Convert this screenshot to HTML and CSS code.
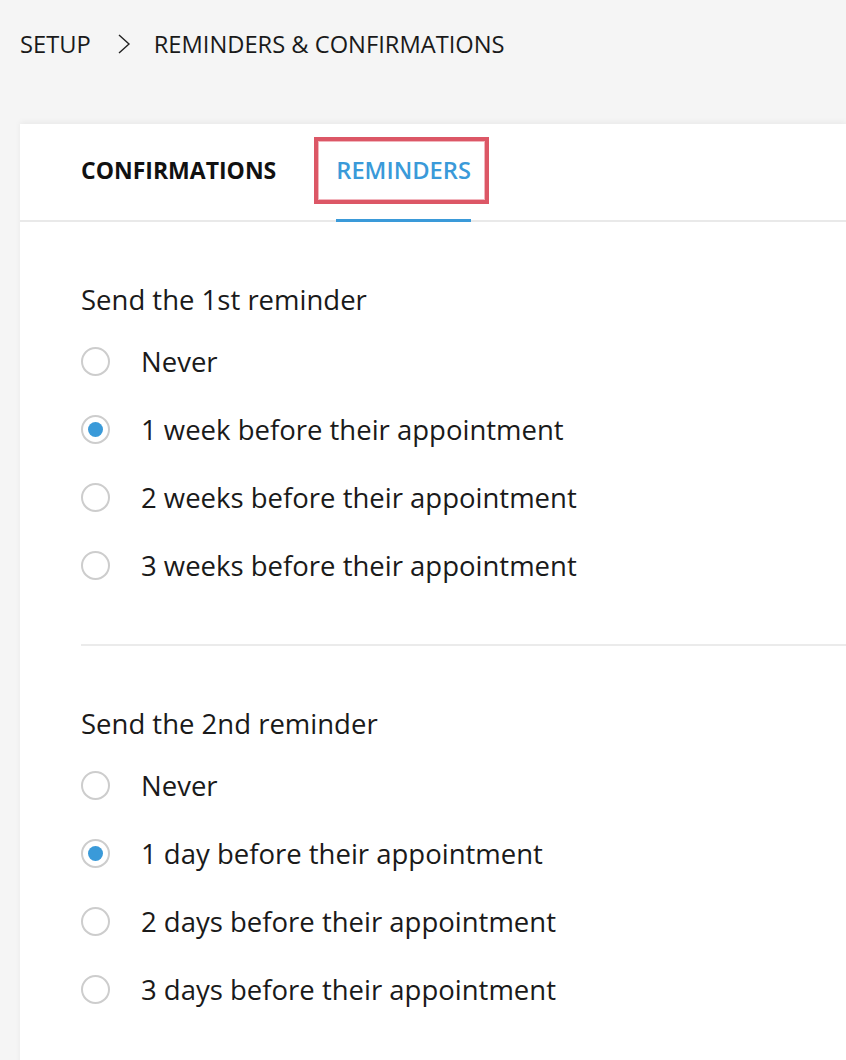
FILE: index.html
```html
<!DOCTYPE html>
<html>
<head>
<meta charset="utf-8">
<link rel="stylesheet" href="styles.css">
</head>
<body>
<nav class="breadcrumb">
  <span class="crumb">SETUP</span>
  <svg class="chev" width="14" height="22" viewBox="0 0 14 22"><path d="M2 2 L12 11 L2 20" fill="none" stroke="#222" stroke-width="1.4"/></svg>
  <span class="crumb">REMINDERS &amp; CONFIRMATIONS</span>
</nav>
<main class="card">
  <div class="tabs">
    <div class="tab">CONFIRMATIONS</div>
    <div class="tab active"><span class="label">REMINDERS</span></div>
  </div>
  <section class="section">
    <h2 class="heading">Send the 1st reminder</h2>
    <div class="option"><span class="radio"></span><span>Never</span></div>
    <div class="option"><span class="radio checked"></span><span>1 week before their appointment</span></div>
    <div class="option"><span class="radio"></span><span>2 weeks before their appointment</span></div>
    <div class="option"><span class="radio"></span><span>3 weeks before their appointment</span></div>
  </section>
  <hr class="divider">
  <section class="section">
    <h2 class="heading">Send the 2nd reminder</h2>
    <div class="option"><span class="radio"></span><span>Never</span></div>
    <div class="option"><span class="radio checked"></span><span>1 day before their appointment</span></div>
    <div class="option"><span class="radio"></span><span>2 days before their appointment</span></div>
    <div class="option"><span class="radio"></span><span>3 days before their appointment</span></div>
  </section>
</main>
</body>
</html>
```
FILE: styles.css
```css
* { box-sizing: border-box; }
html, body { margin: 0; padding: 0; }
body {
  background: #f5f5f5;
  font-family: "Open Sans", "Liberation Sans", sans-serif;
  color: #1a1a1a;
  width: 846px;
  height: 1060px;
  overflow: hidden;
}
.breadcrumb {
  height: 88px;
  display: flex;
  align-items: center;
  padding-left: 20px;
  font-size: 23.7px;
  color: #1a1a1a;
}
.chev { margin: 0 23px 0 26px; }
.card {
  margin-left: 20px;
  margin-top: 36px;
  background: #fff;
  box-shadow: 0 -2px 6px rgba(0,0,0,0.05);
  height: 1000px;
}
.tabs {
  height: 98px;
  border-bottom: 2px solid #e9e9e9;
  display: flex;
  align-items: stretch;
  padding-left: 61px;
  gap: 60px;
}
.tab {
  display: flex;
  align-items: center;
  font-size: 23px;
  font-weight: 700;
  color: #111;
  position: relative;
  padding-bottom: 4px;
}
.tab.active { color: #3a9ad9; font-weight: 600; font-size: 23.7px; }
.tab.active::after {
  content: "";
  position: absolute;
  left: 0; right: 0;
  bottom: -2px;
  height: 3px;
  background: #3a9ad9;
}
.label { position: relative; }
.label::before {
  content: "";
  position: absolute;
  left: -22px; right: -18px;
  top: -17px; bottom: -18px;
  border: 4px solid #dc5766;
  box-shadow: inset 0 0 0 1px #f2b5bd;
}
.section { padding: 63px 0 45px 61px; }
.heading {
  margin: 0 0 12px;
  font-size: 27.5px;
  font-weight: 400;
  line-height: 30px;
  color: #1a1a1a;
}
.option {
  height: 68px;
  display: flex;
  align-items: center;
  font-size: 27.5px;
}
.radio {
  width: 29px;
  height: 29px;
  border-radius: 50%;
  border: 2px solid #cdcdcd;
  margin-right: 31px;
  flex: none;
  display: flex;
  align-items: center;
  justify-content: center;
}
.radio.checked::after {
  content: "";
  width: 15px;
  height: 15px;
  border-radius: 50%;
  background: #3a9ad9;
}
.divider {
  margin: 0 0 0 61px;
  border: 0;
  height: 2px;
  background: #ebebeb;
}
```
